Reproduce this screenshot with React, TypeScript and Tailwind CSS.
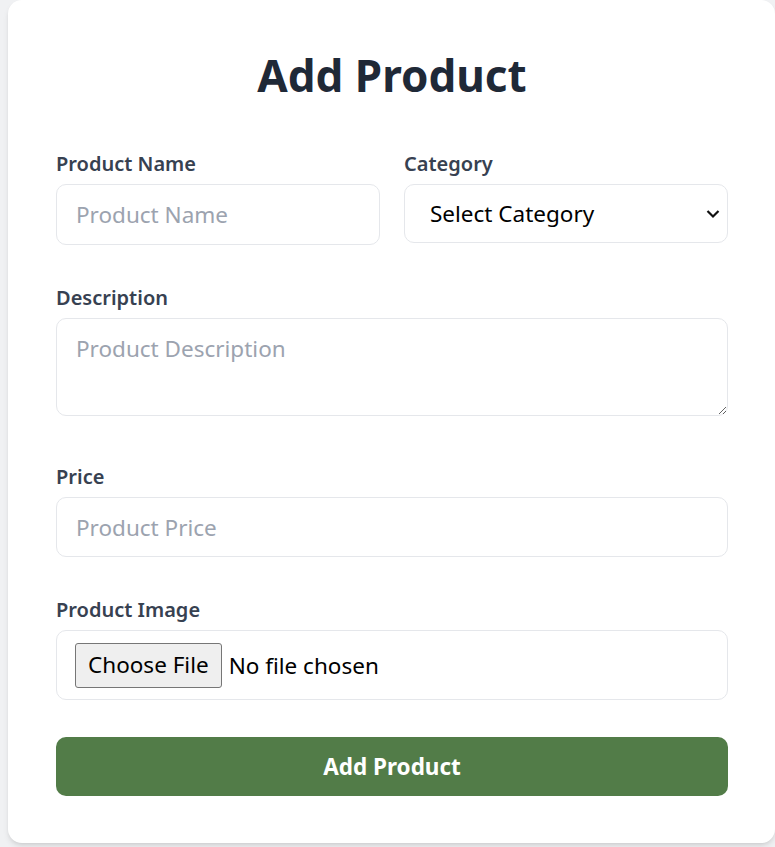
const labelCls =
	"block text-[20px] leading-[28px] font-semibold text-[#374151] mb-[6px]";
const fieldCls =
	"block w-full border border-[#e5e7eb] rounded-[10px] bg-white px-[19px] text-[22.5px] text-[#111827] placeholder:text-[#9ca3af] outline-none";

const App = () => {
	return (
		<div
			className="min-h-[847px] bg-[#f0f1f3] pl-[8px]"
			style={{ fontFamily: '"Noto Sans", "Open Sans", sans-serif' }}
		>
			<div className="w-[767px] bg-white rounded-[14px] shadow-md pt-[50px] pb-[47px] pl-[48px] pr-[47px]">
				<h1 className="text-[44px] leading-[50px] font-bold text-center text-[#1f2937] mb-[50px]">
					Add Product
				</h1>
				<form className="flex flex-col">
					<div className="grid grid-cols-2 gap-[24px]">
						<div>
							<label className={labelCls}>Product Name</label>
							<input
								type="text"
								placeholder="Product Name"
								className={`${fieldCls} h-[61px]`}
							/>
						</div>
						<div>
							<label className={labelCls}>Category</label>
							<div className="relative">
								<select
									className={`${fieldCls} h-[59px] appearance-none pl-[25px] text-black`}
									defaultValue=""
								>
									<option value="">Select Category</option>
									<option value="fruits">Fruits</option>
									<option value="vegetables">Vegetables</option>
								</select>
								<svg
									className="absolute right-[8px] top-1/2 -translate-y-1/2 pointer-events-none"
									width="14"
									height="9"
									viewBox="0 0 14 9"
									fill="none"
								>
									<path
										d="M1.5 1.5 L7 7 L12.5 1.5"
										stroke="#111"
										strokeWidth="2.2"
									/>
								</svg>
							</div>
						</div>
					</div>

					<div className="mt-[39px]">
						<label className={labelCls}>Description</label>
						<textarea
							placeholder="Product Description"
							className={`${fieldCls} h-[98px] pt-[14px] leading-[32px]`}
						/>
					</div>

					<div className="mt-[47px]">
						<label className={labelCls}>Price</label>
						<input
							type="number"
							placeholder="Product Price"
							className={`${fieldCls} h-[60px]`}
						/>
					</div>

					<div className="mt-[39px]">
						<label className={labelCls}>Product Image</label>
						<div className="h-[70px] border border-[#e5e7eb] rounded-[10px] px-[18px] flex items-center">
							<input
								type="file"
								className="text-[22.5px] text-black file:h-[45px] file:px-[12px] file:mr-[7px] file:bg-[#efefef] file:border file:border-[#767676] file:rounded-[3px] file:text-black"
							/>
						</div>
					</div>

					<button
						type="button"
						className="mt-[37px] h-[59px] w-full rounded-[10px] bg-[#527c48] text-white text-[22.5px] font-bold"
					>
						Add Product
					</button>
				</form>
			</div>
		</div>
	);
};

export default App;
